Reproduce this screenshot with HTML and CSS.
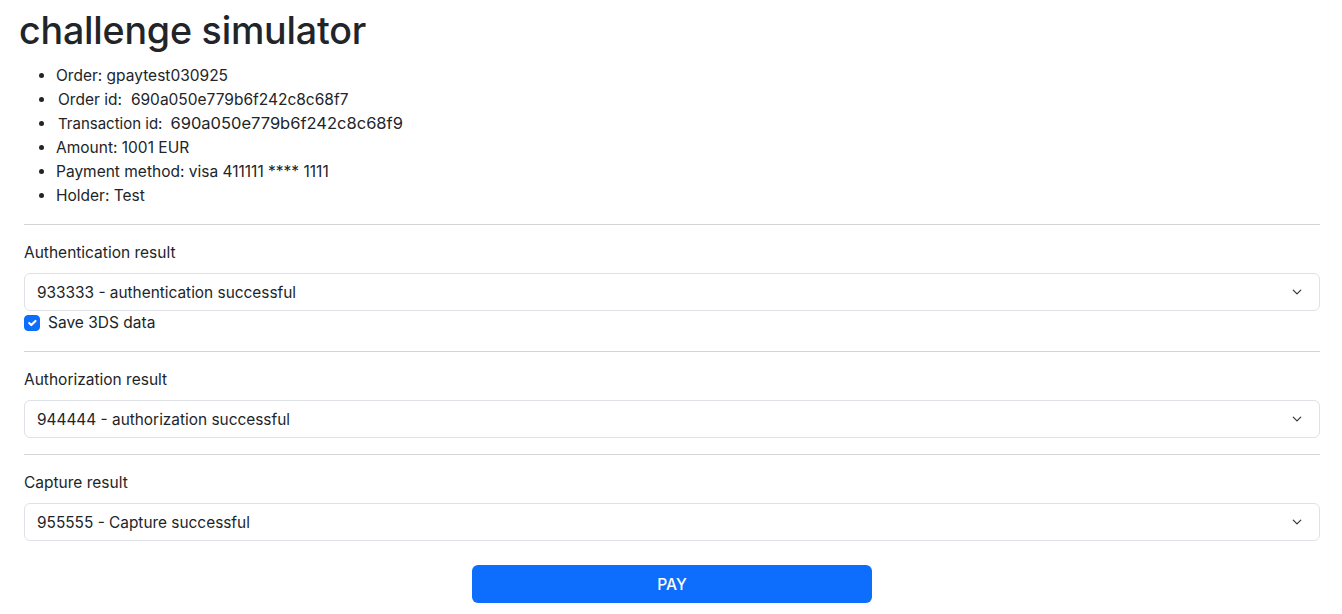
FILE: index.html
```html
<!DOCTYPE html>
<html lang="en">
<head>
<meta charset="utf-8">
<title>challenge simulator</title>
<link rel="stylesheet" href="styles.css">
</head>
<body>
<div class="page">
  <h1 class="title">challenge simulator</h1>
  <div class="content">
    <ul class="info">
      <li>Order: gpaytest030925</li>
      <li><span class="key">Order id:</span><span class="val">690a050e779b6f242c8c68f7</span></li>
      <li><span class="key key-sm">Transaction id:</span><span class="val val-lg">690a050e779b6f242c8c68f9</span></li>
      <li>Amount: 1001 EUR</li>
      <li>Payment method: visa 411111 **** 1111</li>
      <li>Holder: Test</li>
    </ul>
    <hr class="sep">
    <div class="field">
      <label class="label" for="auth">Authentication result</label>
      <select class="select" id="auth">
        <option>933333 - authentication successful</option>
      </select>
      <label class="check">
        <input type="checkbox" class="checkbox" checked>
        <span>Save 3DS data</span>
      </label>
    </div>
    <hr class="sep">
    <div class="field">
      <label class="label" for="authz">Authorization result</label>
      <select class="select" id="authz">
        <option>944444 - authorization successful</option>
      </select>
    </div>
    <hr class="sep">
    <div class="field">
      <label class="label" for="cap">Capture result</label>
      <select class="select" id="cap">
        <option>955555 - Capture successful</option>
      </select>
    </div>
    <div class="actions">
      <button class="pay" type="button">PAY</button>
    </div>
  </div>
</div>
</body>
</html>
```
FILE: styles.css
```css
* { box-sizing: border-box; }
html, body { margin: 0; padding: 0; background: #fff; }
body {
  font-family: Inter, "Liberation Sans", Arial, sans-serif;
  font-size: 16px;
  line-height: 24px;
  color: #212529;
}
.page { padding: 0 22px 0 24px; }
.title {
  margin: 7px 0 0 -5px;
  font-size: 37.6px;
  line-height: 48px;
  font-weight: 500;
  letter-spacing: -0.2px;
}
.content { padding-top: 9px; }
.info {
  margin: 0 0 16px 0;
  padding-left: 32px;
  font-size: 15.5px;
}
.info li { line-height: 24px; height: 24px; }
.key { padding-left: 2px; margin-right: 9px; }
.key-sm { font-size: 15px; margin-right: 8px; }
.val-lg { font-size: 16.5px; line-height: 20px; }
.sep {
  margin: 0;
  border: 0;
  border-top: 1px solid #d3d4d5;
  height: 0;
}
.field { padding: 16px 0; }
.label {
  display: block;
  margin-bottom: 8px;
  font-size: 15.5px;
}
.select {
  display: block;
  width: 100%;
  height: 38px;
  padding: 0 36px 0 12px;
  font-family: inherit;
  font-size: 15.4px;
  color: #212529;
  background-color: #fff;
  border: 1px solid #dee2e6;
  border-radius: 6px;
  appearance: none;
  -webkit-appearance: none;
  background-image: url("data:image/svg+xml,%3csvg xmlns='http://www.w3.org/2000/svg' viewBox='0 0 16 16'%3e%3cpath fill='none' stroke='%23343a40' stroke-linecap='round' stroke-linejoin='round' stroke-width='2' d='m2 5 6 6 6-6'/%3e%3c/svg%3e");
  background-repeat: no-repeat;
  background-position: right 16px center;
  background-size: 12px 10px;
}
.check {
  display: flex;
  align-items: center;
  gap: 8px;
  margin-top: 0;
  height: 24px;
  font-size: 15.5px;
}
.checkbox {
  appearance: none;
  -webkit-appearance: none;
  margin: 0;
  width: 16px;
  height: 16px;
  border-radius: 4px;
  background-color: #0d6efd;
  border: 1px solid #0d6efd;
  background-image: url("data:image/svg+xml,%3csvg xmlns='http://www.w3.org/2000/svg' viewBox='0 0 20 20'%3e%3cpath fill='none' stroke='%23fff' stroke-linecap='round' stroke-linejoin='round' stroke-width='3' d='m6 10 3 3 6-6'/%3e%3c/svg%3e");
  background-size: 100% 100%;
}
.actions {
  display: flex;
  justify-content: center;
  padding-top: 8px;
}
.pay {
  width: 400px;
  height: 38px;
  border: 0;
  border-radius: 6px;
  background: #0d6efd;
  color: #fff;
  font-family: inherit;
  font-size: 15.5px;
  font-weight: 500;
}
```
